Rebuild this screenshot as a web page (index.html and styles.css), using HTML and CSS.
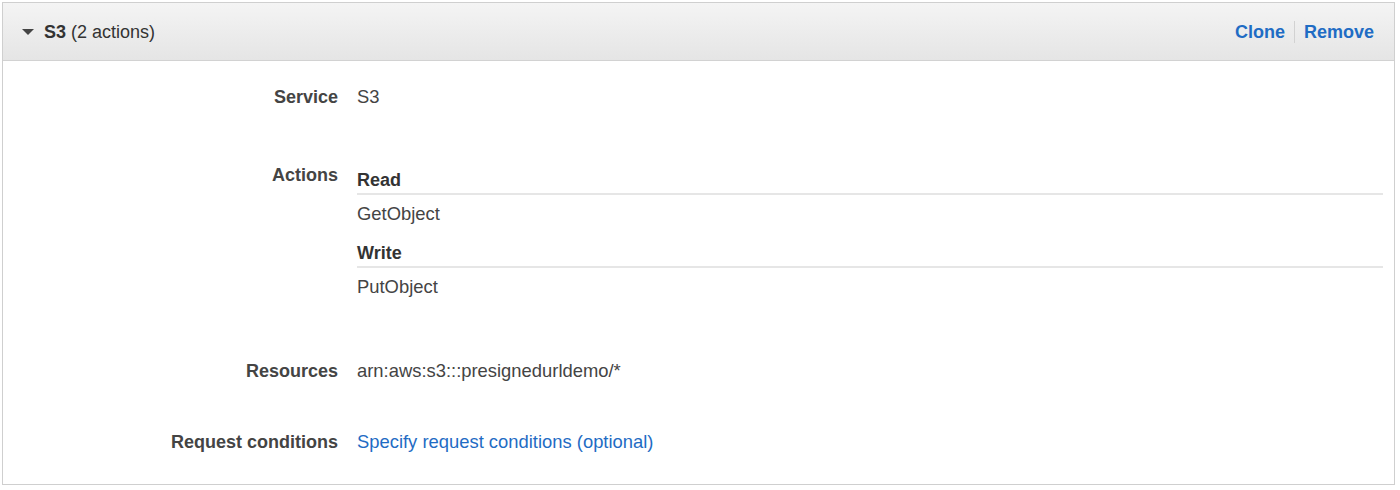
FILE: index.html
```html
<!DOCTYPE html>
<html lang="en">
<head>
    <meta charset="UTF-8">
    <title>S3 permissions</title>
    <link rel="stylesheet" href="styles.css">
</head>
<body>
    <div class="panel">
        <div class="panel-head">
            <div class="panel-title">
                <span class="caret"></span>
                <span><strong>S3</strong> (2 actions)</span>
            </div>
            <div class="panel-links">
                <a href="#">Clone</a>
                <span class="sep"></span>
                <a href="#">Remove</a>
            </div>
        </div>

        <div class="panel-body">
            <div class="row row-service">
                <div class="label">Service</div>
                <div class="value">S3</div>
            </div>

            <div class="row row-actions">
                <div class="label">Actions</div>
                <div class="value actions">
                    <div class="group-title">Read</div>
                    <div class="action">GetObject</div>
                    <div class="group-title group-next">Write</div>
                    <div class="action">PutObject</div>
                </div>
            </div>

            <div class="row row-resources">
                <div class="label">Resources</div>
                <div class="value">arn:aws:s3:::presignedurldemo/*</div>
            </div>

            <div class="row row-conditions">
                <div class="label">Request conditions</div>
                <div class="value"><a href="#">Specify request conditions (optional)</a></div>
            </div>
        </div>
    </div>
</body>
</html>
```

FILE: styles.css
```css
body {
    margin: 0;
    background: #fff;
    font-family: "Liberation Sans", Arial, Helvetica, sans-serif;
    font-size: 18px;
    line-height: 20px;
    color: #333;
}

a {
    color: #1f6cc4;
    text-decoration: none;
}

.panel {
    margin: 2px 0 0 2px;
    width: 1391px;
    border: 1px solid #cfcfcf;
}

.panel-head {
    height: 57px;
    display: flex;
    align-items: center;
    justify-content: space-between;
    background: linear-gradient(#f4f4f4, #e5e5e5);
    border-bottom: 1px solid #d2d2d2;
}

.panel-title {
    display: flex;
    align-items: center;
    padding-left: 19px;
    color: #333;
}

.panel-title strong { font-weight: bold; }

.caret {
    width: 0;
    height: 0;
    border-left: 6px solid transparent;
    border-right: 6px solid transparent;
    border-top: 6px solid #444;
    margin-right: 10px;
    margin-top: 1px;
}

.panel-links {
    display: flex;
    align-items: center;
    padding-right: 20px;
}

.panel-links a { font-weight: bold; }

.sep {
    width: 1px;
    height: 22px;
    background: #d2d2d2;
    margin: 0 9px;
}

.panel-body {
    padding: 26px 11px 32px 0;
}

.row {
    display: grid;
    grid-template-columns: 335px 1fr;
    column-gap: 19px;
}

.label {
    text-align: right;
    font-weight: bold;
    color: #444;
}

.value {
    color: #444;
    font-size: 18.4px;
}

.row-actions { margin-top: 58px; }
.row-resources { margin-top: 64px; }
.row-conditions { margin-top: 51px; }

.actions { padding-top: 5px; }

.group-title {
    font-weight: bold;
    font-size: 18px;
    color: #333;
    padding-bottom: 3px;
    border-bottom: 2px solid #e6e6e6;
}

.group-next { margin-top: 19px; }

.action { margin-top: 9px; }
```
